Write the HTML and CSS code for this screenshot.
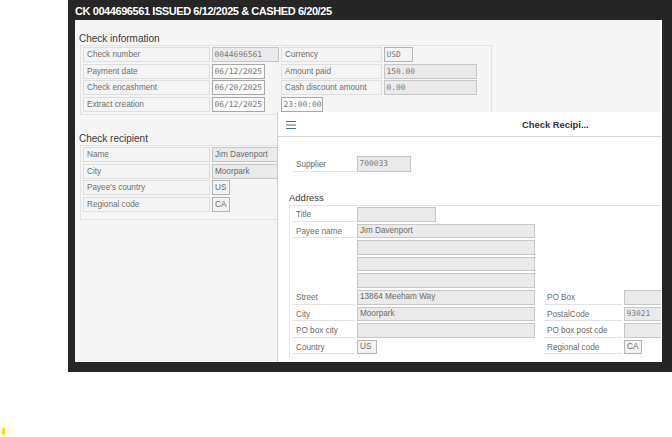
FILE: index.html
```html
<!DOCTYPE html>
<html>
<head>
<meta charset="utf-8">
<link rel="stylesheet" href="styles.css">
</head>
<body>
<div class="frame">
  <div class="title">CK 0044696561 ISSUED 6/12/2025 &amp; CASHED 6/20/25</div>
  <div class="panel">
    <div class="sec-head">Check information</div>
    <div class="group info">
      <div class="lbl">Check number</div>
      <div class="fld mono ro w67">0044696561</div>
      <div class="lbl">Currency</div>
      <div class="fld-cell"><div class="fld mono lt w29">USD</div></div>

      <div class="lbl">Payment date</div>
      <div class="fld-cell"><div class="fld mono ed w53">06/12/2025</div></div>
      <div class="lbl">Amount paid</div>
      <div class="fld mono ro w93">150.00</div>

      <div class="lbl">Check encashment</div>
      <div class="fld-cell"><div class="fld mono ed w53">06/20/2025</div></div>
      <div class="lbl">Cash discount amount</div>
      <div class="fld mono ro w93">0.00</div>

      <div class="lbl">Extract creation</div>
      <div class="fld-cell"><div class="fld mono ed w53">06/12/2025</div></div>
      <div class="fld-cell"><div class="fld mono ed w42">23:00:00</div></div>
      <div></div>
    </div>

    <div class="sec-head second">Check recipient</div>
    <div class="group recip">
      <div class="lbl">Name</div>
      <div class="fld ro">Jim Davenport</div>
      <div class="lbl">City</div>
      <div class="fld ro">Moorpark</div>
      <div class="lbl">Payee's country</div>
      <div class="fld-cell"><div class="fld lt w18">US</div></div>
      <div class="lbl">Regional code</div>
      <div class="fld-cell"><div class="fld lt w18">CA</div></div>
    </div>

    <div class="dialog">
      <div class="dlg-head">
        <svg class="burger" width="10" height="8" viewBox="0 0 10 8"><path d="M0 0.5H10M0 4H10M0 7.5H10" stroke="#3f6fa8" stroke-width="1"/></svg>
        <span class="dlg-title">Check Recipi...</span>
      </div>
      <div class="dlg-body">
        <div class="supplier">
          <div class="dlbl">Supplier</div>
          <div class="fld mono ro w54">700033</div>
        </div>
        <div class="addr-head">Address</div>
        <div class="addr">
          <div class="dlbl">Title</div>
          <div class="fld-cell"><div class="fld ro w79"></div></div>
          <div></div><div></div>

          <div class="dlbl">Payee name</div>
          <div class="fld ro">Jim Davenport</div>
          <div></div><div></div>

          <div class="dlbl blank"></div>
          <div class="fld ro"></div>
          <div></div><div></div>

          <div class="dlbl blank"></div>
          <div class="fld ro"></div>
          <div></div><div></div>

          <div class="dlbl blank"></div>
          <div class="fld ro"></div>
          <div></div><div></div>

          <div class="dlbl">Street</div>
          <div class="fld ro">13864 Meeham Way</div>
          <div class="dlbl right">PO Box</div>
          <div class="fld ro"></div>

          <div class="dlbl">City</div>
          <div class="fld ro">Moorpark</div>
          <div class="dlbl right">PostalCode</div>
          <div class="fld mono ro">93021</div>

          <div class="dlbl">PO box city</div>
          <div class="fld ro"></div>
          <div class="dlbl right">PO box post cde</div>
          <div class="fld ro"></div>

          <div class="dlbl">Country</div>
          <div class="fld-cell"><div class="fld lt w20">US</div></div>
          <div class="dlbl right">Regional code</div>
          <div class="fld-cell"><div class="fld lt w18">CA</div></div>
        </div>
      </div>
    </div>
  </div>
</div>
<div class="marker"></div>
</body>
</html>
```

FILE: styles.css
```css
* { box-sizing: border-box; }
html, body {
  margin: 0;
  padding: 0;
  background: #ffffff;
  width: 672px;
  height: 437px;
  overflow: hidden;
  font-family: "Liberation Sans", Arial, sans-serif;
}
.frame {
  margin-left: 68px;
  width: 604px;
  height: 372px;
  background: #262626;
  padding: 0 10px 10px 7px;
  display: flex;
  flex-direction: column;
}
.title {
  height: 20px;
  line-height: 23px;
  color: #ffffff;
  font-weight: bold;
  font-size: 11px;
  letter-spacing: -0.42px;
  white-space: nowrap;
}
.panel {
  position: relative;
  flex: 1;
  background: #f5f5f5;
  border-right: 1px solid #ffffff;
  padding-left: 4px;
}
.sec-head {
  font-size: 10px;
  color: #3a3a3a;
  margin-top: 12px;
  height: 13px;
  line-height: 13px;
}
.sec-head.second { margin-top: 17px; }
.group {
  margin-left: 1px;
  border: 1px solid #e2e2e2;
  padding: 1px 2px 2px 2px;
  display: grid;
  grid-auto-rows: 15px;
  row-gap: 1.7px;
  column-gap: 2px;
}
.info {
  width: 412px;
  grid-template-columns: 127px 67px 101px 93px;
}
.recip {
  width: 230px;
  padding-bottom: 7px;
  grid-template-columns: 127px 1fr;
}
.lbl {
  border: 1px solid #dedede;
  background: #f4f4f4;
  font-size: 8.2px;
  color: #707070;
  padding-left: 3px;
  line-height: 13px;
  white-space: nowrap;
}
.fld-cell { display: flex; }
.fld {
  height: 15px;
  border: 1px solid #c4c4c4;
  background: #e9e9e9;
  font-size: 8.2px;
  color: #6a6a6a;
  padding-left: 2px;
  line-height: 13px;
  white-space: nowrap;
  overflow: hidden;
}
.mono {
  font-family: "DejaVu Sans Mono", "Liberation Mono", monospace;
  font-size: 7.9px;
  color: #787878;
  padding-left: 1.5px;
}
.ro { background: #eaeaea; border-color: #c6c6c6; }
.ed { background: #f9f9f9; border-color: #a9a9a9; }
.lt { background: #f3f3f3; border-color: #b4b4b4; }
.w67 { width: 67px; }
.w29 { width: 29px; }
.w53 { width: 53px; }
.w93 { width: 93px; }
.w42 { width: 42px; }
.w18 { width: 18px; }
.w20 { width: 20px; }
.w54 { width: 54px; }
.w79 { width: 79px; }

.dialog {
  position: absolute;
  left: 202px;
  top: 92px;
  right: 0;
  bottom: 0;
  background: #ffffff;
  border-left: 1px solid #cfcfcf;
  overflow: hidden;
}
.dlg-head {
  height: 25px;
  border-bottom: 1px solid #d6d6d6;
  display: flex;
  align-items: center;
  padding-left: 8px;
  padding-top: 1px;
}
.burger { flex: none; }
.dlg-title {
  margin-left: 226px;
  font-size: 9.4px;
  font-weight: bold;
  color: #333;
  white-space: nowrap;
}
.dlg-body {
  padding-left: 11px;
}
.supplier {
  margin-top: 19px;
  margin-left: 4px;
  display: flex;
  gap: 2px;
}
.supplier .dlbl { width: 62px; height: 16px; line-height: 17px; }
.supplier .fld { height: 16px; line-height: 14px; }
.dlbl {
  font-size: 8.2px;
  color: #6b6b6b;
  padding-left: 3px;
  line-height: 14px;
  border-bottom: 1px solid #e3e3e3;
  white-space: nowrap;
}
.dlbl.blank { border-bottom: none; }
.dlbl.right { margin-left: 7px; }
.addr-head {
  margin-top: 19px;
  font-size: 9.5px;
  color: #3a3a3a;
  height: 14px;
  line-height: 13px;
}
.addr {
  border-top: 1px solid #e3e3e3;
  border-left: 1px solid #e3e3e3;
  padding: 1px 0 4px 3px;
  display: grid;
  grid-template-columns: 62px 178px 85px 60px;
  grid-auto-rows: 14.6px;
  row-gap: 2px;
  column-gap: 2px;
  width: 420px;
}
.addr .fld { height: 14.6px; line-height: 12.5px; }
.addr .dlbl { line-height: 15px; }
.marker {
  position: absolute;
  left: 2px;
  top: 428px;
  width: 3px;
  height: 7px;
  background: #f5e000;
  border-radius: 1px;
}
```
